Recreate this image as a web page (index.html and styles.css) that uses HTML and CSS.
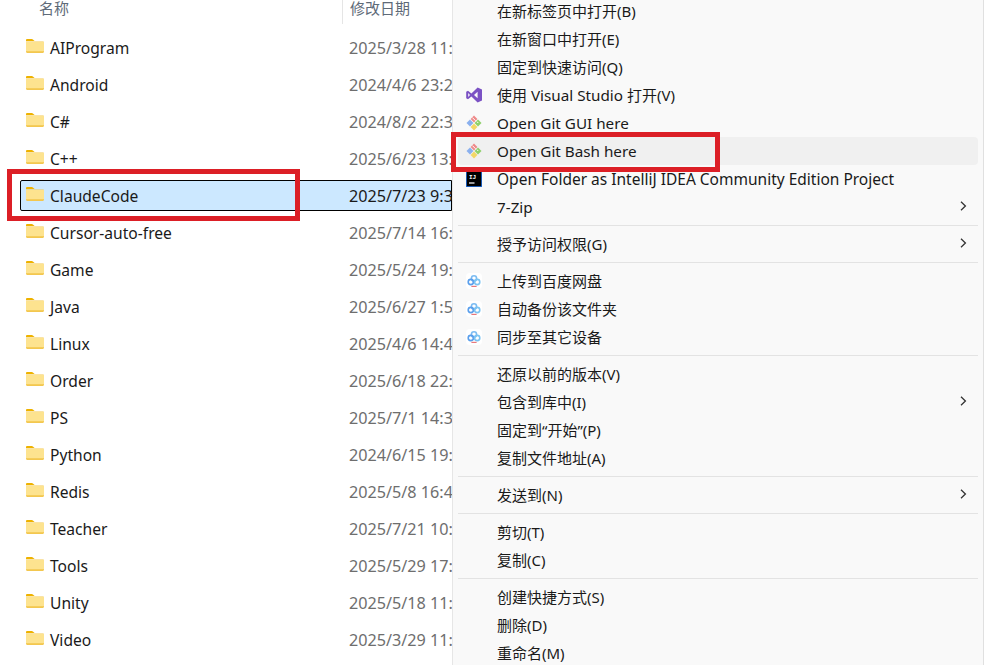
FILE: index.html
```html
<!DOCTYPE html>
<html lang="zh">
<head>
<meta charset="utf-8">
<title>Explorer</title>
<link rel="stylesheet" href="styles.css">
</head>
<body>
<svg class="defs" width="0" height="0" aria-hidden="true">
  <defs>
    <symbol id="folder" viewBox="0 0 18 14">
      <path d="M0 1.2C0 .5.5 0 1.2 0h4.6c.5 0 .8.2 1.1.5L8.6 2H0z" fill="#eeb200"/>
      <path d="M0 2.6h17c.6 0 1 .4 1 1v9.2c0 .7-.5 1.2-1.2 1.2H1.2C.5 14 0 13.5 0 12.8z" fill="#f3c74f"/>
      <path d="M0 3h18v9.2H0z" fill="#fde38f"/>
    </symbol>
    <symbol id="git" viewBox="0 0 16 16">
      <path d="M8 .5 11.4 4 8 7.4 4.6 4z" fill="#ee8a8a"/>
      <path d="M4 4.6 7.4 8 4 11.4.5 8z" fill="#8ab0ee"/>
      <path d="M12 4.6 15.5 8 12 11.4 8.6 8z" fill="#8fd06a"/>
      <path d="M8 8.6 11.4 12 8 15.5 4.6 12z" fill="#f2d766"/>
      <path d="M6.4 2.6 9.6 5.8M11 6.6 12.2 8" stroke="#fff" stroke-width="1"/>
    </symbol>
    <symbol id="cloud" viewBox="0 0 16 16">
      <rect width="16" height="16" rx="4" fill="#fff"/>
      <circle cx="8" cy="5.4" r="2.6" fill="none" stroke="#7dbcf2" stroke-width="1.6"/>
      <circle cx="4.8" cy="9" r="2.6" fill="none" stroke="#5a9fec" stroke-width="1.6"/>
      <circle cx="11.2" cy="9" r="2.6" fill="none" stroke="#7cc4f2" stroke-width="1.6"/>
      <path d="M5.4 13.4h5.2" stroke="#e8787c" stroke-width="1.2"/>
    </symbol>
    <symbol id="chev" viewBox="0 0 7 10">
      <path d="M1 .8 5.4 5 1 9.2" fill="none" stroke="#333" stroke-width="1.3"/>
    </symbol>
  </defs>
</svg>

<header class="head">
  <span class="head-name">名称</span>
  <span class="head-date">修改日期</span>
</header>

<ul class="files">
  <li class="file"><svg class="fold"><use href="#folder"/></svg><span class="fname">AIProgram</span><span class="fdate">2025/3/28 11:09</span></li>
  <li class="file"><svg class="fold"><use href="#folder"/></svg><span class="fname">Android</span><span class="fdate">2024/4/6 23:26</span></li>
  <li class="file"><svg class="fold"><use href="#folder"/></svg><span class="fname">C#</span><span class="fdate">2024/8/2 22:31</span></li>
  <li class="file"><svg class="fold"><use href="#folder"/></svg><span class="fname">C++</span><span class="fdate">2025/6/23 13:12</span></li>
  <li class="file selected"><svg class="fold"><use href="#folder"/></svg><span class="fname">ClaudeCode</span><span class="fdate">2025/7/23 9:37</span></li>
  <li class="file"><svg class="fold"><use href="#folder"/></svg><span class="fname">Cursor-auto-free</span><span class="fdate">2025/7/14 16:20</span></li>
  <li class="file"><svg class="fold"><use href="#folder"/></svg><span class="fname">Game</span><span class="fdate">2025/5/24 19:03</span></li>
  <li class="file"><svg class="fold"><use href="#folder"/></svg><span class="fname">Java</span><span class="fdate">2025/6/27 1:52</span></li>
  <li class="file"><svg class="fold"><use href="#folder"/></svg><span class="fname">Linux</span><span class="fdate">2025/4/6 14:41</span></li>
  <li class="file"><svg class="fold"><use href="#folder"/></svg><span class="fname">Order</span><span class="fdate">2025/6/18 22:10</span></li>
  <li class="file"><svg class="fold"><use href="#folder"/></svg><span class="fname">PS</span><span class="fdate">2025/7/1 14:35</span></li>
  <li class="file"><svg class="fold"><use href="#folder"/></svg><span class="fname">Python</span><span class="fdate">2024/6/15 19:22</span></li>
  <li class="file"><svg class="fold"><use href="#folder"/></svg><span class="fname">Redis</span><span class="fdate">2025/5/8 16:47</span></li>
  <li class="file"><svg class="fold"><use href="#folder"/></svg><span class="fname">Teacher</span><span class="fdate">2025/7/21 10:16</span></li>
  <li class="file"><svg class="fold"><use href="#folder"/></svg><span class="fname">Tools</span><span class="fdate">2025/5/29 17:08</span></li>
  <li class="file"><svg class="fold"><use href="#folder"/></svg><span class="fname">Unity</span><span class="fdate">2025/5/18 11:30</span></li>
  <li class="file"><svg class="fold"><use href="#folder"/></svg><span class="fname">Video</span><span class="fdate">2025/3/29 11:11</span></li>
</ul>

<div class="mark mark-file"></div>

<nav class="menu">
  <div class="item"><span class="ic"></span><span class="label">在新标签页中打开(B)</span></div>
  <div class="item"><span class="ic"></span><span class="label">在新窗口中打开(E)</span></div>
  <div class="item"><span class="ic"></span><span class="label">固定到快速访问(Q)</span></div>
  <div class="item"><span class="ic"><svg class="icon" viewBox="0 0 16 16"><path d="M11.6.6 16 2.4v11.2l-4.4 1.8L5.4 9.6 2 12.2.2 11.2V4.8L2 3.8l3.4 2.6zM11.6 4.8 8 8l3.6 3.2zM2.2 6v4L4 8z" fill="#7b52c4" fill-rule="evenodd"/></svg></span><span class="label">使用 <span class="lat">Visual Studio</span> 打开(V)</span></div>
  <div class="item"><span class="ic"><svg class="icon"><use href="#git"/></svg></span><span class="label lat">Open Git GUI here</span></div>
  <div class="item hover"><span class="ic"><svg class="icon"><use href="#git"/></svg></span><span class="label lat">Open Git Bash here</span></div>
  <div class="item"><span class="ic"><svg class="icon" viewBox="0 0 16 16"><rect width="16" height="16" fill="#1f6fe0"/><rect x=".8" width="14.4" height="15.2" fill="#000"/><text class="ij" x="3" y="8">IJ</text><rect x="3" y="11.4" width="5.5" height="1.2" fill="#fff"/></svg></span><span class="label lat-wide">Open Folder as IntelliJ IDEA Community Edition Project</span></div>
  <div class="item"><span class="ic"></span><span class="label lat">7-Zip</span><svg class="chev"><use href="#chev"/></svg></div>
  <div class="sep"></div>
  <div class="item"><span class="ic"></span><span class="label">授予访问权限(G)</span><svg class="chev"><use href="#chev"/></svg></div>
  <div class="sep"></div>
  <div class="item"><span class="ic"><svg class="icon"><use href="#cloud"/></svg></span><span class="label">上传到百度网盘</span></div>
  <div class="item"><span class="ic"><svg class="icon"><use href="#cloud"/></svg></span><span class="label">自动备份该文件夹</span></div>
  <div class="item"><span class="ic"><svg class="icon"><use href="#cloud"/></svg></span><span class="label">同步至其它设备</span></div>
  <div class="sep"></div>
  <div class="item"><span class="ic"></span><span class="label">还原以前的版本(V)</span></div>
  <div class="item"><span class="ic"></span><span class="label">包含到库中(I)</span><svg class="chev"><use href="#chev"/></svg></div>
  <div class="item"><span class="ic"></span><span class="label">固定到“开始”(P)</span></div>
  <div class="item"><span class="ic"></span><span class="label">复制文件地址(A)</span></div>
  <div class="sep"></div>
  <div class="item"><span class="ic"></span><span class="label">发送到(N)</span><svg class="chev"><use href="#chev"/></svg></div>
  <div class="sep"></div>
  <div class="item"><span class="ic"></span><span class="label">剪切(T)</span></div>
  <div class="item"><span class="ic"></span><span class="label">复制(C)</span></div>
  <div class="sep"></div>
  <div class="item"><span class="ic"></span><span class="label">创建快捷方式(S)</span></div>
  <div class="item"><span class="ic"></span><span class="label">删除(D)</span></div>
  <div class="item"><span class="ic"></span><span class="label">重命名(M)</span></div>
</nav>

<div class="mark mark-menu"></div>
</body>
</html>
```
FILE: styles.css
```css
* { box-sizing: border-box; }
html, body { height: 100%; }
body {
  margin: 0;
  position: relative;
  overflow: hidden;
  background: #fff;
  color: #1a1a1a;
  font-family: "Noto Sans", "Noto Sans CJK SC", sans-serif;
  font-size: 15px;
  line-height: 20px;
}
.defs { position: absolute; }

.head {
  display: flex;
  height: 24px;
  padding-left: 39px;
  color: #5e6a78;
  font-size: 15px;
  line-height: 16px;
}
.head-name { width: 303px; }
.head-date { border-left: 1px solid #e5e5e5; padding-left: 7px; }

.files {
  list-style: none;
  width: 452px;
  margin: 8px 0 0;
  padding: 0 0 0 20px;
  display: flex;
  flex-direction: column;
  gap: 6px;
}
.file {
  height: 31px;
  display: flex;
  align-items: center;
  padding-left: 6px;
  border: 1px solid transparent;
  font-size: 15.6px;
  white-space: nowrap;
}
.fold { width: 18px; height: 14px; margin: -3px 6px 0 -1px; flex: none; }
.fname { width: 299px; flex: none; }
.fdate { color: #6e6e6e; flex: none; font-size: 16.2px; }
.selected {
  background: #cce8ff;
  border-color: #000;
  border-radius: 2px 0 0 2px;
}
.selected .fdate { color: #1a1a1a; }

.menu {
  position: absolute;
  left: 452px;
  top: -3px;
  width: 532px;
  height: 680px;
  padding: 0 5px;
  background: #f9f9f9;
  border-left: 1px solid #e6e6e6;
  border-right: 1px solid #e0e0e0;
}
.item {
  height: 28px;
  display: flex;
  align-items: center;
  border-radius: 4px;
  color: #1a1a1a;
  white-space: nowrap;
}
.hover { background: #f0f0f0; }
.ic {
  width: 39px;
  flex: none;
  display: flex;
  padding-left: 8px;
}
.icon { width: 16px; height: 16px; }
.ij { font: 700 6px "Liberation Mono", monospace; fill: #fff; }
.label { flex: 1; }
.lat { font-size: 15.25px; }
.lat-wide { font-size: 15.5px; }
.chev { width: 7px; height: 10px; margin: -3px 11px 0 0; }
.sep {
  height: 1px;
  margin: 4px 0;
  background: #e3e3e3;
}

.mark {
  position: absolute;
  border: 5px solid #dc1f26;
  pointer-events: none;
}
.mark-file { left: 7px; top: 169px; width: 293px; height: 52px; }
.mark-menu { left: 451px; top: 132px; width: 269px; height: 40px; }
```
